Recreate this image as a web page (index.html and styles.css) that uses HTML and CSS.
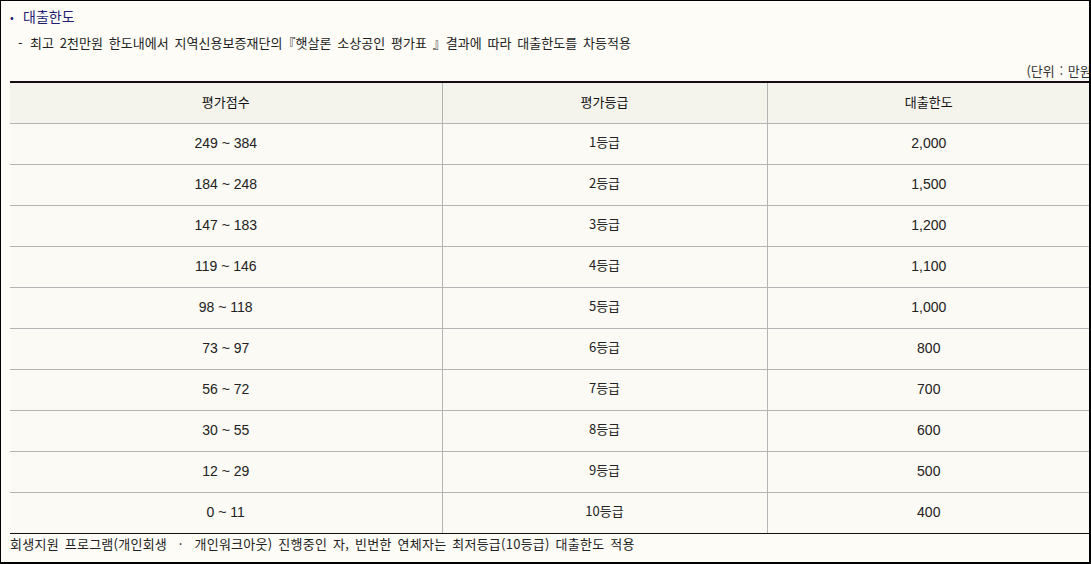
FILE: index.html
```html
<!DOCTYPE html>
<html lang="ko">
<head>
<meta charset="utf-8">
<title>대출한도</title>
<link rel="stylesheet" href="styles.css">
</head>
<body>
<div class="frame">
  <h3 class="title"><span class="bullet">•</span>대출한도</h3>
  <p class="desc"><span class="dash">-</span>최고 2천만원 한도내에서 지역신용보증재단의『햇살론 소상공인 평가표 』결과에 따라 대출한도를 차등적용</p>
  <div class="unit">(단위 : 만원)</div>
  <table class="grade">
    <colgroup><col class="c1"><col class="c2"><col class="c3"></colgroup>
    <thead>
      <tr><th>평가점수</th><th>평가등급</th><th>대출한도</th></tr>
    </thead>
    <tbody>
      <tr><td class="num">249 ~ 384</td><td>1등급</td><td class="num">2,000</td></tr>
      <tr><td class="num">184 ~ 248</td><td>2등급</td><td class="num">1,500</td></tr>
      <tr><td class="num">147 ~ 183</td><td>3등급</td><td class="num">1,200</td></tr>
      <tr><td class="num">119 ~ 146</td><td>4등급</td><td class="num">1,100</td></tr>
      <tr><td class="num">98 ~ 118</td><td>5등급</td><td class="num">1,000</td></tr>
      <tr><td class="num">73 ~ 97</td><td>6등급</td><td class="num">800</td></tr>
      <tr><td class="num">56 ~ 72</td><td>7등급</td><td class="num">700</td></tr>
      <tr><td class="num">30 ~ 55</td><td>8등급</td><td class="num">600</td></tr>
      <tr><td class="num">12 ~ 29</td><td>9등급</td><td class="num">500</td></tr>
      <tr><td class="num">0 ~ 11</td><td>10등급</td><td class="num">400</td></tr>
    </tbody>
  </table>
  <p class="note">회생지원 프로그램(개인회생 &nbsp;·&nbsp; 개인워크아웃) 진행중인 자, 빈번한 연체자는 최저등급(10등급) 대출한도 적용</p>
</div>
</body>
</html>
```

FILE: styles.css
```css
html, body {
  margin: 0;
  padding: 0;
  background: #fdfcf6;
}
body {
  font-family: "Noto Sans CJK KR", "Liberation Sans", sans-serif;
  font-size: 13px;
  color: #222;
}
.frame {
  box-sizing: border-box;
  width: 1091px;
  height: 564px;
  border-left: 1px solid #000;
  border-top: 1px solid #000;
  border-right: 2px solid #000;
  border-bottom: 2px solid #000;
  padding: 0 0 0 9px;
  overflow: hidden;
}
.title {
  margin: 0;
  height: 30px;
  line-height: 30px;
  font-size: 14px;
  font-weight: normal;
  color: #231c72;
}
.bullet {
  display: inline-block;
  width: 13px;
  font-size: 11px;
  color: #231c72;
}
.desc {
  margin: 0;
  height: 26px;
  line-height: 24px;
  padding-left: 8px;
  word-spacing: 2px;
  letter-spacing: 0.05px;
  color: #222;
}
.dash {
  display: inline-block;
  width: 12px;
}
.unit {
  width: 1086px;
  text-align: right;
  height: 24px;
  line-height: 28px;
  word-spacing: 1px;
  color: #333;
}
.grade {
  width: 1080px;
  border-collapse: collapse;
  border-top: 2px solid #1a0a14;
  border-bottom: 1px solid #111;
  table-layout: fixed;
}
.c1 { width: 432px; }
.c2 { width: 325px; }
.c3 { width: 323px; }
.grade th,
.grade td {
  padding: 0 0 3px;
  line-height: 37px;
  text-align: center;
  border-bottom: 1px solid #b4b4b4;
  border-left: 1px solid #b4b4b4;
}
.grade th {
  font-weight: normal;
  background: #f4f3ec;
  color: #111;
}
.grade td {
  padding: 0 0 4px;
  line-height: 36px;
  background: #fbfaf4;
  color: #222;
}
.grade td.num {
  padding: 1px 0 2px;
  line-height: 37px;
  font-family: "Liberation Sans", "Noto Sans CJK KR", sans-serif;
  font-size: 14px;
}
.grade th:first-child,
.grade td:first-child {
  border-left: none;
}
.grade tbody tr:last-child td {
  border-bottom: 1px solid #111;
}
.note {
  margin: 0;
  height: 20px;
  line-height: 19px;
  word-spacing: 2px;
  letter-spacing: 0.25px;
  color: #222;
}
```
